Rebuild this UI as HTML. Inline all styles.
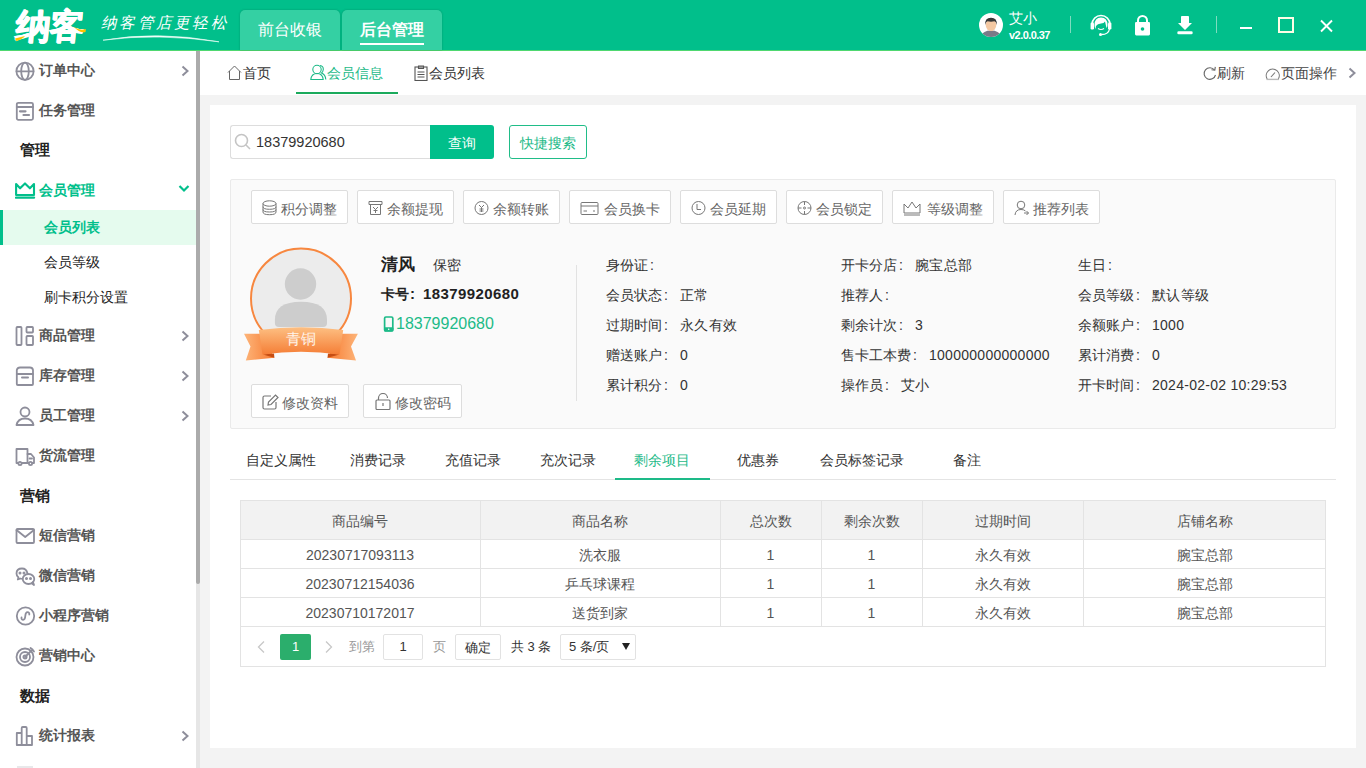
<!DOCTYPE html>
<html><head><meta charset="utf-8">
<style>
*{box-sizing:border-box;margin:0;padding:0}
html,body{width:1366px;height:768px;overflow:hidden;background:#f3f3f3;font-family:"Liberation Sans",sans-serif;color:#333}
.a{position:absolute}
#hdr{left:0;top:0;width:1366px;height:51px;background:#01bf8b;border-bottom:1px solid #4fd870}
.htab{top:10px;height:40px;width:100px;background:#34d0a3;border-radius:5px 5px 0 0;box-shadow:0 0 2px rgba(0,70,50,.35);color:#fff;font-size:16px;text-align:center;line-height:40px}
#side{left:0;top:51px;width:196px;height:717px;background:#fff}
.si{left:0;width:196px;height:40px;font-size:14px;color:#666;font-weight:bold}
.si .t{position:absolute;left:39px;top:0;line-height:40px}
.si svg.ic{position:absolute;left:15px;top:10px}
.si svg.ch{position:absolute;left:180px;top:15px}
.sec{left:20px;font-size:15px;font-weight:bold;color:#222;line-height:20px}
.sub{left:44px;font-size:14px;color:#333;font-weight:bold}
#sbar{left:196px;top:51px;width:4px;height:717px;background:#e6e6e6}
#sthumb{left:196px;top:51px;width:4px;height:533px;background:#ababab;border-radius:0 0 2px 2px}
#ctabs{left:200px;top:51px;width:1166px;height:44px;background:#fff}
.ct{top:51px;height:44px;line-height:44px;font-size:14px;color:#333}
#card{left:210px;top:105px;width:1146px;height:643px;background:#fff}
.btn{height:36px;border:1px solid #ddd;background:#fff;border-radius:2px;font-size:14px;color:#666;line-height:34px}
.btn span{top:1px!important}
.lbl{font-size:14px;color:#333}
.cl{display:inline-block;width:14px;padding-left:2px}
.th{font-size:14px;color:#555;text-align:center}
.td{font-size:14px;color:#555;text-align:center}
</style></head><body>
<div id="hdr" class="a"></div>
<div class="a" style="left:14px;top:4px;font-size:35px;font-weight:900;color:#fff;letter-spacing:-1px;line-height:44px;transform:skewX(-6deg);transform-origin:0 40px;text-shadow:0.7px 0 0 #fff,-0.7px 0 0 #fff,0 0.6px 0 #fff">纳客</div><svg class="a" style="left:14px;top:22px" width="76" height="22"><path d="M1 16.5 Q6 15 11 14 Q8 17.5 2 19Z" fill="#fcc400"/><path d="M60 5 Q66 9 72 7 L71.5 10 Q66 11.5 60 5Z" fill="#fcc400"/></svg>
<div class="a" style="left:101px;top:12px;font-size:15.5px;color:#fff;letter-spacing:2.3px;font-style:italic;font-weight:100;line-height:22px">纳客管店更轻松</div>
<svg class="a" style="left:100px;top:30px" width="130" height="14"><path d="M3 10.2 Q58 0.5 119 11.8 Q58 3 3 10.2Z" fill="#f0fff8" stroke="#f0fff8" stroke-width="0.6"/></svg>
<div class="a htab" style="left:240px">前台收银</div>
<div class="a htab" style="left:342px;font-weight:bold">后台管理</div>
<div class="a" style="left:360px;top:43px;width:64px;height:2px;background:#fff"></div>

<!-- header right -->
<svg class="a" style="left:979px;top:13px" width="24" height="24"><defs><clipPath id="av"><circle cx="12" cy="12" r="12"/></clipPath></defs><circle cx="12" cy="12" r="12" fill="#fff"/><g clip-path="url(#av)"><path d="M2 23 Q4 17.5 12 17.5 Q20 17.5 22 23 V25 H2Z" fill="#7a7a88"/><rect x="10" y="14" width="4" height="4" fill="#f2c6a0"/><ellipse cx="12" cy="12" rx="5.3" ry="6" fill="#f4c8a2"/><path d="M6.3 12 Q5.5 4.8 12 4.8 Q18.5 4.8 17.7 12 Q17 8.5 15.5 8.3 Q12 9 8.5 8.3 Q7 8.5 6.3 12Z" fill="#383838"/></g></svg>
<div class="a" style="left:1009px;top:10px;font-size:14px;color:#fff">艾小</div>
<div class="a" style="left:1009px;top:29px;font-size:11px;color:#fff;font-weight:bold;letter-spacing:-0.55px">v2.0.0.37</div>
<div class="a" style="left:1070px;top:16px;width:1px;height:17px;background:#7fdcc0"></div>
<svg class="a" style="left:1090px;top:14px" width="22" height="22" viewBox="0 0 22 22"><path d="M2 10.5 A9 9 0 0 1 20 10.5" stroke="#fff" stroke-width="1.5" fill="none"/><rect x="0.6" y="8.5" width="3.4" height="7" rx="1.2" fill="#fff"/><rect x="18" y="8.5" width="3.4" height="7" rx="1.2" fill="#fff"/><path d="M4.5 11 Q4.5 3.5 11 3.5 Q17.5 3.5 17.5 11 Q17.5 13 16.5 14 L15 7.5 Q14 9.5 11 9.5 Q7.5 9.5 6 12 L5.5 15 Q4.5 13.5 4.5 11Z" fill="#fff"/><path d="M8 14.5 Q11 16.5 14 14.5" stroke="#fff" stroke-width="1.2" fill="none"/><path d="M19.5 15 Q18.5 20.5 11.5 20.5" stroke="#fff" stroke-width="1.3" fill="none"/><circle cx="10.5" cy="20.5" r="1.5" fill="#fff"/></svg>
<svg class="a" style="left:1134px;top:15px" width="17" height="21" viewBox="0 0 17 21"><path d="M4 8 V5.5 A4.5 4.5 0 0 1 13 5.5 V8" stroke="#fff" stroke-width="2" fill="none"/><rect x="1" y="7" width="15" height="13.4" rx="1.3" fill="#fff"/><circle cx="8.5" cy="14" r="1.8" fill="#01bf8b"/></svg>
<svg class="a" style="left:1177px;top:15px" width="17" height="20" viewBox="0 0 17 20"><path d="M4 1.8 Q4 1 5 1 H11 Q12 1 12 1.8 V8 H15 L8 15 L1 8 H4Z" fill="#fff"/><rect x="0.3" y="16.3" width="15.4" height="3" rx="1.4" fill="#fff"/></svg>
<div class="a" style="left:1216px;top:16px;width:1px;height:17px;background:#7fdcc0"></div>
<div class="a" style="left:1240px;top:27px;width:12px;height:2px;background:#fff"></div>
<div class="a" style="left:1278px;top:17px;width:16px;height:16px;border:2px solid #fdfde6"></div>
<svg class="a" style="left:1319px;top:19px" width="15" height="15"><path d="M2 1.5 L13 12.5 M13 1.5 L2 12.5" stroke="#fff" stroke-width="1.9"/></svg>

<!-- sidebar -->
<div id="side" class="a"></div>
<div id="sbar" class="a"></div>
<div id="sthumb" class="a"></div>
<div class="a si" style="top:50px"><svg class="ic" width="22" height="22" viewBox="0 0 22 22" fill="none" stroke="#8e8e9b" stroke-width="1.8" stroke-linecap="round" stroke-linejoin="round"><circle cx="10" cy="11.3" r="8.6"/><ellipse cx="10" cy="11.3" rx="3.8" ry="8.6"/><path d="M1.6 11.3 H18.4"/></svg><div class="t" style="color:#555">订单中心</div><svg class="ch" width="10" height="12"><path d="M2.5 1.5 L7.5 6 L2.5 10.5" stroke="#8e8e9b" stroke-width="2" fill="none"/></svg></div>
<div class="a si" style="top:90px"><svg class="ic" width="22" height="22" viewBox="0 0 22 22" fill="none" stroke="#8e8e9b" stroke-width="1.8" stroke-linecap="round" stroke-linejoin="round"><rect x="1.8" y="2.8" width="16.2" height="17" rx="1.5"/><path d="M1.8 7 H18"/><path d="M5 11.3 H10.5 M8.5 15 H14" stroke-width="2.2"/></svg><div class="t" style="color:#555">任务管理</div></div>
<div class="a sec" style="top:140px">管理</div>
<div class="a si" style="top:170px"><svg class="ic" width="22" height="22" viewBox="0 0 22 22" fill="none" stroke="#01bf8b" stroke-width="1.8" stroke-linecap="round" stroke-linejoin="round"><path d="M1.1 4 L5.1 8.3 L10 3.4 L14.9 8.3 L19 4 V15 H1.1 Z" stroke-width="2.1"/><path d="M1.1 17.6 H19" stroke-width="2.4"/></svg><div class="t" style="color:#01bf8b">会员管理</div></div>
<svg class="a" style="left:178px;top:184px" width="12" height="10"><path d="M1.5 2 L6 6.5 L10.5 2" stroke="#01bf8b" stroke-width="2.2" fill="none"/></svg>
<div class="a" style="left:0;top:210px;width:196px;height:35px;background:#e5fbee"></div><div class="a" style="left:0;top:210px;width:3px;height:35px;background:#01bf8b"></div>
<div class="a sub" style="top:210px;line-height:35px;color:#01bf8b">会员列表</div>
<div class="a sub" style="top:245px;line-height:35px;font-weight:500;color:#222">会员等级</div>
<div class="a sub" style="top:280px;line-height:35px;font-weight:500;color:#222">刷卡积分设置</div>
<div class="a si" style="top:315px"><svg class="ic" width="22" height="22" viewBox="0 0 22 22" fill="none" stroke="#8e8e9b" stroke-width="1.8" stroke-linecap="round" stroke-linejoin="round"><rect x="1.5" y="2" width="5" height="18" rx="0.8"/><rect x="11.5" y="2" width="6.5" height="5.5" rx="0.8"/><rect x="11.5" y="11" width="6.5" height="9" rx="0.8"/></svg><div class="t" style="color:#555">商品管理</div><svg class="ch" width="10" height="12"><path d="M2.5 1.5 L7.5 6 L2.5 10.5" stroke="#8e8e9b" stroke-width="2" fill="none"/></svg></div>
<div class="a si" style="top:355px"><svg class="ic" width="22" height="22" viewBox="0 0 22 22" fill="none" stroke="#8e8e9b" stroke-width="1.8" stroke-linecap="round" stroke-linejoin="round"><path d="M1.8 9 V19 Q1.8 20 2.8 20 H17 Q18 20 18 19 V9"/><path d="M1.8 9 V5 Q2.5 2.5 5 2.5 H15 Q17.5 2.5 18 5 V9 Z"/><path d="M7 12.5 H13" stroke-width="2"/></svg><div class="t" style="color:#555">库存管理</div><svg class="ch" width="10" height="12"><path d="M2.5 1.5 L7.5 6 L2.5 10.5" stroke="#8e8e9b" stroke-width="2" fill="none"/></svg></div>
<div class="a si" style="top:395px"><svg class="ic" width="22" height="22" viewBox="0 0 22 22" fill="none" stroke="#8e8e9b" stroke-width="1.8" stroke-linecap="round" stroke-linejoin="round"><circle cx="10" cy="7" r="4.5"/><path d="M1.5 20 Q3 13.5 10 13.5 Q17 13.5 18.5 20 Z"/></svg><div class="t" style="color:#555">员工管理</div><svg class="ch" width="10" height="12"><path d="M2.5 1.5 L7.5 6 L2.5 10.5" stroke="#8e8e9b" stroke-width="2" fill="none"/></svg></div>
<div class="a si" style="top:435px"><svg class="ic" width="22" height="22" viewBox="0 0 22 22" fill="none" stroke="#8e8e9b" stroke-width="1.8" stroke-linecap="round" stroke-linejoin="round"><path d="M1.5 4 H12.5 V18 H1.5 Z"/><path d="M12.5 9 H16 L19 12.5 V18 H12.5"/><circle cx="5" cy="18.5" r="1.6" fill="#fff"/><circle cx="15.5" cy="18.5" r="1.6" fill="#fff"/><path d="M14.5 13.5 H17"/></svg><div class="t" style="color:#555">货流管理</div></div>
<div class="a sec" style="top:486px">营销</div>
<div class="a si" style="top:515px"><svg class="ic" width="22" height="22" viewBox="0 0 22 22" fill="none" stroke="#8e8e9b" stroke-width="1.8" stroke-linecap="round" stroke-linejoin="round"><rect x="1.5" y="4" width="17.5" height="14" rx="1"/><path d="M1.5 5 L10.2 12 L19 5"/></svg><div class="t" style="color:#555">短信营销</div></div>
<div class="a si" style="top:555px"><svg class="ic" width="22" height="22" viewBox="0 0 22 22" fill="none" stroke="#8e8e9b" stroke-width="1.8" stroke-linecap="round" stroke-linejoin="round"><path d="M12.5 8.5 Q11.5 3.5 7 3.5 Q1.5 3.5 1.5 8.5 Q1.5 11 3.5 12.5 L2.8 14.5 L5.5 13.5 Q6.5 13.8 7.5 13.8"/><ellipse cx="13.5" cy="14" rx="5.8" ry="5"/><path d="M17 18.5 L19 20 L18 17"/><circle cx="5" cy="8" r="0.6" fill="#8e8e9b"/><circle cx="9" cy="8" r="0.6" fill="#8e8e9b"/><circle cx="11.5" cy="13.5" r="0.6" fill="#8e8e9b"/><circle cx="15.5" cy="13.5" r="0.6" fill="#8e8e9b"/></svg><div class="t" style="color:#555">微信营销</div></div>
<div class="a si" style="top:595px"><svg class="ic" width="22" height="22" viewBox="0 0 22 22" fill="none" stroke="#8e8e9b" stroke-width="1.8" stroke-linecap="round" stroke-linejoin="round"><circle cx="10.5" cy="11" r="8.7"/><path d="M6.5 12.5 Q6.3 14.8 8.2 14.8 Q10 14.8 10.3 11 Q10.6 7.2 12.5 7.2 Q14.5 7.2 14.3 9.5"/></svg><div class="t" style="color:#555">小程序营销</div></div>
<div class="a si" style="top:635px"><svg class="ic" width="22" height="22" viewBox="0 0 22 22" fill="none" stroke="#8e8e9b" stroke-width="1.8" stroke-linecap="round" stroke-linejoin="round"><circle cx="10" cy="12" r="8.5"/><circle cx="10" cy="12" r="5"/><circle cx="10" cy="12" r="1.6"/><path d="M10 12 L17.5 4.5 M15.5 3 L17.5 4.5 L19 6.5"/></svg><div class="t" style="color:#555">营销中心</div></div>
<div class="a sec" style="top:686px">数据</div>
<div class="a si" style="top:715px"><svg class="ic" width="22" height="22" viewBox="0 0 22 22" fill="none" stroke="#8e8e9b" stroke-width="1.8" stroke-linecap="round" stroke-linejoin="round"><path d="M1.8 20 V8 H6.7 V20 Z M6.7 20 V3 Q6.7 2 7.7 2 H10.7 Q11.7 2 11.7 3 V20 Z M11.7 20 V11 H17 V20 Z"/></svg><div class="t" style="color:#555">统计报表</div><svg class="ch" width="10" height="12"><path d="M2.5 1.5 L7.5 6 L2.5 10.5" stroke="#8e8e9b" stroke-width="2" fill="none"/></svg></div>
<div class="a" style="left:17px;top:766px;width:16px;height:2px;background:#e8e8ea"></div>


<!-- content tabs -->
<div id="ctabs" class="a"></div>
<div id="card" class="a"></div>
<svg class="a" style="left:227px;top:65px" width="16" height="16" fill="none" stroke="#666" stroke-width="1"><path d="M1 7.5 L7.5 1 L14 7.5 M2.5 6 V14.5 H12.5 V6"/></svg>
<div class="a ct" style="left:243px">首页</div>
<svg class="a" style="left:310px;top:64px" width="17" height="17" fill="none" stroke="#1dba88" stroke-width="1.1"><circle cx="7" cy="5.5" r="4.2"/><path d="M0.8 15.5 Q1.5 9.5 7 9.5 Q12.5 9.5 13.2 15.5 Z"/><path d="M10 1.5 Q13.5 2 13.3 5.5 Q13 8 11.5 9 Q15.5 10.5 15.8 15.5"/></svg>
<div class="a ct" style="left:327px;color:#1dba88">会员信息</div>
<div class="a" style="left:296px;top:92px;width:102px;height:2px;background:#1baa5c"></div>
<svg class="a" style="left:414px;top:65px" width="14" height="16" fill="none" stroke="#555" stroke-width="1.1"><rect x="1" y="2" width="12" height="13.5"/><path d="M4.5 1 H9.5 V3.5 H4.5Z M3.5 7 H10.5 M3.5 9.5 H10.5 M3.5 12 H10.5"/></svg>
<div class="a ct" style="left:429px">会员列表</div>
<svg class="a" style="left:1203px;top:66px" width="14" height="15" fill="none" stroke="#666" stroke-width="1.1"><path d="M11.5 4 A5.8 5.8 0 1 0 12.5 9"/><path d="M8.5 3.8 L11.8 4.2 L12.3 0.8"/></svg>
<div class="a ct" style="left:1217px;color:#444">刷新</div>
<svg class="a" style="left:1265px;top:66px" width="16" height="15" fill="none" stroke="#777" stroke-width="1.1"><path d="M2.2 13 A6.5 6.5 0 1 1 13.3 13"/><path d="M1.5 13.4 H14" stroke="#bbb" stroke-width="1.4"/><path d="M6 11 L10 6.5"/></svg>
<div class="a ct" style="left:1281px;color:#444">页面操作</div>
<svg class="a" style="left:1347px;top:67px" width="10" height="12"><path d="M2.5 1.5 L7.5 6 L2.5 10.5" stroke="#8e8e9b" stroke-width="2" fill="none"/></svg>
<div class="a" style="left:230px;top:125px;width:201px;height:34px;border:1px solid #ddd;border-right:none;border-radius:3px 0 0 3px;background:#fff"></div>
<svg class="a" style="left:234px;top:133px" width="18" height="18" fill="none" stroke="#c4c4c4" stroke-width="1.6"><circle cx="7.5" cy="7.5" r="6"/><path d="M12 12 L16 16"/></svg>
<div class="a" style="left:256px;top:125px;line-height:34px;font-size:14.5px;color:#333">18379920680</div>
<div class="a" style="left:430px;top:125px;width:64px;height:34px;background:#01bf8b;border-radius:0 3px 3px 0;color:#fff;font-size:14px;text-align:center;line-height:36px">查询</div>
<div class="a" style="left:509px;top:125px;width:78px;height:34px;border:1px solid #20bd88;border-radius:3px;color:#1dba88;font-size:14px;text-align:center;line-height:34px">快捷搜索</div>
<div class="a" style="left:230px;top:179px;width:1106px;height:250px;background:#fafafa;border:1px solid #eaeaea;border-radius:2px"></div>
<div class="a btn" style="left:251px;top:190px;width:97px;height:34px"><svg class="a" style="left:10px;top:9px" width="16" height="16" fill="none" stroke="#777" stroke-width="1"><ellipse cx="7.5" cy="3.5" rx="6.5" ry="2.7"/><path d="M1 3.5 V12 Q1 14.7 7.5 14.7 Q14 14.7 14 12 V3.5 M1 6.7 Q1 9.3 7.5 9.3 Q14 9.3 14 6.7 M1 9.5 Q1 12 7.5 12 Q14 12 14 9.5"/></svg><span class="a" style="left:29px;top:0">积分调整</span></div>
<div class="a btn" style="left:357px;top:190px;width:97px;height:34px"><svg class="a" style="left:10px;top:9px" width="16" height="16" fill="none" stroke="#777" stroke-width="1"><path d="M1 1.5 H14 V4.5 H1Z M2.5 4.5 V14.5 H12.5 V4.5 M5 7 L7.5 9.5 L10 7 M7.5 9.5 V13 M5.5 10.5 H9.5"/></svg><span class="a" style="left:29px;top:0">余额提现</span></div>
<div class="a btn" style="left:463px;top:190px;width:97px;height:34px"><svg class="a" style="left:10px;top:9px" width="16" height="16" fill="none" stroke="#777" stroke-width="1"><circle cx="7.5" cy="8" r="6.5"/><path d="M5 5 L7.5 7.5 L10 5 M7.5 7.5 V12 M5.5 9 H9.5 M5.5 11 H9.5"/></svg><span class="a" style="left:29px;top:0">余额转账</span></div>
<div class="a btn" style="left:569px;top:190px;width:102px;height:34px"><svg class="a" style="left:10px;top:9px" width="20" height="16" fill="none" stroke="#777" stroke-width="1"><rect x="1" y="2.5" width="17" height="12" rx="1"/><path d="M1 6 H18 M3.5 11 H7 M13 11 h2"/></svg><span class="a" style="left:34px;top:0">会员换卡</span></div>
<div class="a btn" style="left:680px;top:190px;width:97px;height:34px"><svg class="a" style="left:10px;top:9px" width="16" height="16" fill="none" stroke="#777" stroke-width="1"><circle cx="7.5" cy="8" r="6.5"/><path d="M6 4 V9.5 H10"/></svg><span class="a" style="left:29px;top:0">会员延期</span></div>
<div class="a btn" style="left:786px;top:190px;width:97px;height:34px"><svg class="a" style="left:10px;top:9px" width="16" height="16" fill="none" stroke="#777" stroke-width="1"><circle cx="7.5" cy="8" r="6.5"/><path d="M7.5 1.5 V5 M7.5 11 V14.5 M1 8 H4.5 M10.5 8 H14"/><circle cx="7.5" cy="8" r="1"/></svg><span class="a" style="left:29px;top:0">会员锁定</span></div>
<div class="a btn" style="left:892px;top:190px;width:102px;height:34px"><svg class="a" style="left:10px;top:9px" width="20" height="16" fill="none" stroke="#777" stroke-width="1"><path d="M1 4 L5 8 L9 2 L13 8 L17 4 V13 H1 Z M1 15 H17"/></svg><span class="a" style="left:34px;top:0">等级调整</span></div>
<div class="a btn" style="left:1003px;top:190px;width:97px;height:34px"><svg class="a" style="left:10px;top:9px" width="16" height="16" fill="none" stroke="#777" stroke-width="1"><circle cx="7" cy="5" r="3.8"/><path d="M1 15 Q1.5 9.5 7 9.5 Q10 9.5 11.5 11 M10 13 H14.5 L12.5 11 M14.5 13 L12.5 15"/></svg><span class="a" style="left:29px;top:0">推荐列表</span></div>
<svg class="a" style="left:240px;top:244px" width="124" height="120">
<defs><linearGradient id="rg" x1="0" y1="0" x2="0" y2="1"><stop offset="0" stop-color="#fdbf82"/><stop offset="1" stop-color="#f57e36"/></linearGradient>
<linearGradient id="tg" x1="0" y1="0" x2="1" y2="0"><stop offset="0" stop-color="#fdb57a"/><stop offset="1" stop-color="#f77a30"/></linearGradient>
<linearGradient id="tg2" x1="1" y1="0" x2="0" y2="0"><stop offset="0" stop-color="#fdb57a"/><stop offset="1" stop-color="#f77a30"/></linearGradient>
<clipPath id="cc"><circle cx="61" cy="54.6" r="50"/></clipPath></defs>
<circle cx="61" cy="54.6" r="50" fill="#ececec" stroke="#f7873f" stroke-width="2"/>
<g clip-path="url(#cc)" fill="#cdcdcd"><circle cx="60.5" cy="40" r="15.7"/><path d="M34.9 76 Q34.9 57.8 61 57.8 Q87 57.8 87 76 V79 Q87 83 83 83 H39 Q34.9 83 34.9 79 Z"/></g>
<path d="M4 89.7 L22 89.7 L34.4 113.7 L5.8 116.4 L10.5 102.6 Z" fill="url(#tg)"/>
<path d="M117.9 89.7 L100 89.7 L87.5 113.7 L116 116.4 L111 102.6 Z" fill="url(#tg2)"/>
<path d="M22.9 110.4 L34.4 113.7 L34 109.5 Z M99.5 110.4 L87.5 113.7 L88 109.5 Z" fill="#c64d12"/>
<path d="M18.8 86 Q61 80.5 103.2 86 L99.5 110.4 Q61 105 22.5 110.4 Z" fill="url(#rg)"/>
<text x="61" y="99.5" font-size="15" fill="#fff4ea" text-anchor="middle" font-family="Liberation Sans, sans-serif">青铜</text>
</svg>
<div class="a" style="left:381px;top:254px;font-size:17px;font-weight:bold;color:#222;line-height:22px">清风</div>
<div class="a" style="left:433px;top:255px;font-size:14px;color:#333;line-height:20px">保密</div>
<div class="a" style="left:381px;top:283px;font-size:14px;font-weight:bold;color:#222;line-height:22px">卡号<span class="cl" style="padding-left:1px;font-size:15px">:</span><span style="font-size:15px;letter-spacing:0.4px">18379920680</span></div>
<svg class="a" style="left:383px;top:316px" width="11" height="16"><rect x="1.6" y="1" width="8.2" height="14" rx="1.3" fill="none" stroke="#1dba88" stroke-width="1.7"/><rect x="1" y="11.2" width="9.4" height="4.3" rx="1" fill="#1dba88"/><circle cx="5.7" cy="13.3" r="0.8" fill="#fff"/></svg>
<div class="a" style="left:396px;top:313px;font-size:16px;color:#1dba88;line-height:22px">18379920680</div>
<div class="a" style="left:576px;top:265px;width:1px;height:136px;background:#e2e2e2"></div>
<div class="a btn" style="left:251px;top:384px;width:98px;height:34px"><svg class="a" style="left:10px;top:9px" width="18" height="16" fill="none" stroke="#777" stroke-width="1.2"><path d="M9 2 H2.5 Q1 2 1 3.5 V13.5 Q1 15 2.5 15 H12.5 Q14 15 14 13.5 V8"/><path d="M6 11 L6.5 8 L13.5 1 L16 3.5 L9 10.5 Z"/></svg><span class="a" style="left:30px;top:0">修改资料</span></div>
<div class="a btn" style="left:363px;top:384px;width:99px;height:34px"><svg class="a" style="left:11px;top:8px" width="16" height="18" fill="none" stroke="#777" stroke-width="1.2"><path d="M3.5 7 V5 A4.5 4.5 0 0 1 12.5 5"/><rect x="1" y="7" width="14" height="9.5" rx="1"/><path d="M8 10 V13"/></svg><span class="a" style="left:31px;top:0">修改密码</span></div>
<div class="a lbl" style="left:606px;top:255px;line-height:20px">身份证<span class="cl">:</span><span style="margin-left:4px;letter-spacing:0.27px"></span></div>
<div class="a lbl" style="left:841px;top:255px;line-height:20px">开卡分店<span class="cl">:</span><span style="margin-left:4px;letter-spacing:0.27px">腕宝总部</span></div>
<div class="a lbl" style="left:1078px;top:255px;line-height:20px">生日<span class="cl">:</span><span style="margin-left:4px;letter-spacing:0.27px"></span></div>
<div class="a lbl" style="left:606px;top:285px;line-height:20px">会员状态<span class="cl">:</span><span style="margin-left:4px;letter-spacing:0.27px">正常</span></div>
<div class="a lbl" style="left:841px;top:285px;line-height:20px">推荐人<span class="cl">:</span><span style="margin-left:4px;letter-spacing:0.27px"></span></div>
<div class="a lbl" style="left:1078px;top:285px;line-height:20px">会员等级<span class="cl">:</span><span style="margin-left:4px;letter-spacing:0.27px">默认等级</span></div>
<div class="a lbl" style="left:606px;top:315px;line-height:20px">过期时间<span class="cl">:</span><span style="margin-left:4px;letter-spacing:0.27px">永久有效</span></div>
<div class="a lbl" style="left:841px;top:315px;line-height:20px">剩余计次<span class="cl">:</span><span style="margin-left:4px;letter-spacing:0.27px">3</span></div>
<div class="a lbl" style="left:1078px;top:315px;line-height:20px">余额账户<span class="cl">:</span><span style="margin-left:4px;letter-spacing:0.27px">1000</span></div>
<div class="a lbl" style="left:606px;top:345px;line-height:20px">赠送账户<span class="cl">:</span><span style="margin-left:4px;letter-spacing:0.27px">0</span></div>
<div class="a lbl" style="left:841px;top:345px;line-height:20px">售卡工本费<span class="cl">:</span><span style="margin-left:4px;letter-spacing:0.27px">100000000000000</span></div>
<div class="a lbl" style="left:1078px;top:345px;line-height:20px">累计消费<span class="cl">:</span><span style="margin-left:4px;letter-spacing:0.27px">0</span></div>
<div class="a lbl" style="left:606px;top:375px;line-height:20px">累计积分<span class="cl">:</span><span style="margin-left:4px;letter-spacing:0.27px">0</span></div>
<div class="a lbl" style="left:841px;top:375px;line-height:20px">操作员<span class="cl">:</span><span style="margin-left:4px;letter-spacing:0.27px">艾小</span></div>
<div class="a lbl" style="left:1078px;top:375px;line-height:20px">开卡时间<span class="cl">:</span><span style="margin-left:4px;letter-spacing:0.27px">2024-02-02 10:29:53</span></div>
<div class="a" style="left:246px;top:450px;font-size:14px;line-height:20px;color:#333">自定义属性</div>
<div class="a" style="left:350px;top:450px;font-size:14px;line-height:20px;color:#333">消费记录</div>
<div class="a" style="left:445px;top:450px;font-size:14px;line-height:20px;color:#333">充值记录</div>
<div class="a" style="left:540px;top:450px;font-size:14px;line-height:20px;color:#333">充次记录</div>
<div class="a" style="left:634px;top:450px;font-size:14px;line-height:20px;color:#1dba88">剩余项目</div>
<div class="a" style="left:737px;top:450px;font-size:14px;line-height:20px;color:#333">优惠券</div>
<div class="a" style="left:820px;top:450px;font-size:14px;line-height:20px;color:#333">会员标签记录</div>
<div class="a" style="left:953px;top:450px;font-size:14px;line-height:20px;color:#333">备注</div>
<div class="a" style="left:230px;top:479px;width:1106px;height:1px;background:#e4e4e4"></div>
<div class="a" style="left:615px;top:478px;width:95px;height:2px;background:#1dba88"></div>
<div class="a" style="left:240px;top:500px;width:1086px;height:167px;border:1px solid #e3e3e3;background:#fff"></div>
<div class="a" style="left:241px;top:501px;width:1084px;height:38px;background:#f2f2f2"></div>
<div class="a" style="left:241px;top:539px;width:1084px;height:1px;background:#e3e3e3"></div>
<div class="a" style="left:241px;top:568px;width:1084px;height:1px;background:#e3e3e3"></div>
<div class="a" style="left:241px;top:597px;width:1084px;height:1px;background:#e3e3e3"></div>
<div class="a" style="left:241px;top:626px;width:1084px;height:1px;background:#e3e3e3"></div>
<div class="a" style="left:480px;top:501px;width:1px;height:125px;background:#e3e3e3"></div>
<div class="a" style="left:720px;top:501px;width:1px;height:125px;background:#e3e3e3"></div>
<div class="a" style="left:821px;top:501px;width:1px;height:125px;background:#e3e3e3"></div>
<div class="a" style="left:922px;top:501px;width:1px;height:125px;background:#e3e3e3"></div>
<div class="a" style="left:1083px;top:501px;width:1px;height:125px;background:#e3e3e3"></div>
<div class="a th" style="left:240px;width:240px;top:511px;line-height:20px">商品编号</div>
<div class="a th" style="left:480px;width:240px;top:511px;line-height:20px">商品名称</div>
<div class="a th" style="left:720px;width:101px;top:511px;line-height:20px">总次数</div>
<div class="a th" style="left:821px;width:101px;top:511px;line-height:20px">剩余次数</div>
<div class="a th" style="left:922px;width:161px;top:511px;line-height:20px">过期时间</div>
<div class="a th" style="left:1083px;width:243px;top:511px;line-height:20px">店铺名称</div>
<div class="a td" style="left:240px;width:240px;top:545px;line-height:20px">20230717093113</div>
<div class="a td" style="left:480px;width:240px;top:545px;line-height:20px">洗衣服</div>
<div class="a td" style="left:720px;width:101px;top:545px;line-height:20px">1</div>
<div class="a td" style="left:821px;width:101px;top:545px;line-height:20px">1</div>
<div class="a td" style="left:922px;width:161px;top:545px;line-height:20px">永久有效</div>
<div class="a td" style="left:1083px;width:243px;top:545px;line-height:20px">腕宝总部</div>
<div class="a td" style="left:240px;width:240px;top:574px;line-height:20px">20230712154036</div>
<div class="a td" style="left:480px;width:240px;top:574px;line-height:20px">乒乓球课程</div>
<div class="a td" style="left:720px;width:101px;top:574px;line-height:20px">1</div>
<div class="a td" style="left:821px;width:101px;top:574px;line-height:20px">1</div>
<div class="a td" style="left:922px;width:161px;top:574px;line-height:20px">永久有效</div>
<div class="a td" style="left:1083px;width:243px;top:574px;line-height:20px">腕宝总部</div>
<div class="a td" style="left:240px;width:240px;top:603px;line-height:20px">20230710172017</div>
<div class="a td" style="left:480px;width:240px;top:603px;line-height:20px">送货到家</div>
<div class="a td" style="left:720px;width:101px;top:603px;line-height:20px">1</div>
<div class="a td" style="left:821px;width:101px;top:603px;line-height:20px">1</div>
<div class="a td" style="left:922px;width:161px;top:603px;line-height:20px">永久有效</div>
<div class="a td" style="left:1083px;width:243px;top:603px;line-height:20px">腕宝总部</div>
<svg class="a" style="left:256px;top:640px" width="10" height="14"><path d="M8 1.5 L2.5 7 L8 12.5" stroke="#c8c8c8" stroke-width="1.3" fill="none"/></svg>
<div class="a" style="left:280px;top:634px;width:31px;height:26px;background:#2bae6c;border-radius:2px;color:#fff;font-size:13px;text-align:center;line-height:26px">1</div>
<svg class="a" style="left:324px;top:640px" width="10" height="14"><path d="M2 1.5 L7.5 7 L2 12.5" stroke="#c8c8c8" stroke-width="1.3" fill="none"/></svg>
<div class="a" style="left:349px;top:637px;font-size:13px;color:#999;line-height:20px">到第</div>
<div class="a" style="left:383px;top:634px;width:40px;height:26px;border:1px solid #e2e2e2;border-radius:2px;font-size:13px;color:#333;text-align:center;line-height:24px">1</div>
<div class="a" style="left:433px;top:637px;font-size:13px;color:#999;line-height:20px">页</div>
<div class="a" style="left:455px;top:634px;width:46px;height:26px;border:1px solid #e2e2e2;border-radius:2px;font-size:13px;color:#333;text-align:center;line-height:26px">确定</div>
<div class="a" style="left:511px;top:637px;font-size:13px;color:#333;line-height:20px">共 3 条</div>
<div class="a" style="left:560px;top:634px;width:76px;height:26px;border:1px solid #e2e2e2;border-radius:2px;font-size:13px;color:#333;line-height:24px;padding-left:8px">5 条/页</div>
<svg class="a" style="left:622px;top:643px" width="8" height="8"><path d="M0 0 H8 L4 7Z" fill="#222"/></svg>


</body></html>
